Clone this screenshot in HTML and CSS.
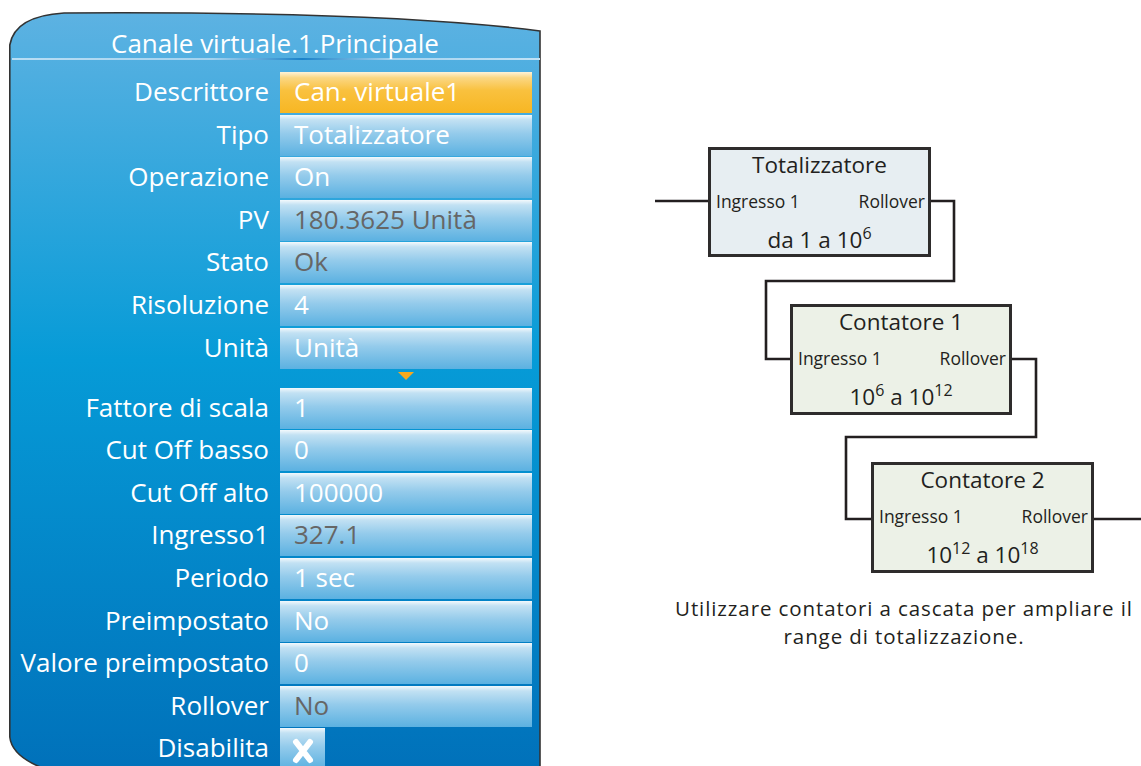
FILE: index.html
```html
<!DOCTYPE html>
<html lang="it">
<head>
    <meta charset="UTF-8">
    <meta name="viewport" content="width=device-width, initial-scale=1.0">
    <title>Canale virtuale - Totalizzatore</title>
    <link rel="stylesheet" href="styles.css">
</head>
<body>

<div class="page">

    <!-- Instrument menu panel -->
    <div class="panel">
        <div class="panel-title">Canale virtuale.1.Principale</div>
        <div class="panel-rule"></div>

        <div class="rows">
            <div class="row"><span class="label">Descrittore</span><span class="value value-focus">Can. virtuale1</span></div>
            <div class="row"><span class="label">Tipo</span><span class="value">Totalizzatore</span></div>
            <div class="row"><span class="label">Operazione</span><span class="value">On</span></div>
            <div class="row"><span class="label">PV</span><span class="value value-ro">180.3625 Unità</span></div>
            <div class="row"><span class="label">Stato</span><span class="value value-ro">Ok</span></div>
            <div class="row"><span class="label">Risoluzione</span><span class="value">4</span></div>
            <div class="row"><span class="label">Unità</span><span class="value">Unità</span></div>

            <div class="more"><span></span><span class="more-cell"><span class="more-arrow"></span></span></div>

            <div class="row"><span class="label">Fattore di scala</span><span class="value">1</span></div>
            <div class="row"><span class="label">Cut Off basso</span><span class="value">0</span></div>
            <div class="row"><span class="label">Cut Off alto</span><span class="value">100000</span></div>
            <div class="row"><span class="label">Ingresso1</span><span class="value value-ro">327.1</span></div>
            <div class="row"><span class="label">Periodo</span><span class="value">1 sec</span></div>
            <div class="row"><span class="label">Preimpostato</span><span class="value">No</span></div>
            <div class="row"><span class="label">Valore preimpostato</span><span class="value">0</span></div>
            <div class="row"><span class="label">Rollover</span><span class="value value-ro">No</span></div>
            <div class="row">
                <span class="label">Disabilita</span>
                <span class="check">
                    <svg width="26" height="26" viewBox="0 0 26 26">
                        <path d="M6 4 L20 22 M20 4 L6 22" stroke="#fff" stroke-width="6" stroke-linecap="round" fill="none"/>
                    </svg>
                </span>
            </div>
        </div>
    </div>

    <!-- Cascade diagram -->
    <div class="diagram">
        <div class="canvas">
            <svg class="wires" width="501" height="580" viewBox="0 0 501 580">
                <path d="M15 201 H68" />
                <path d="M290 201 H314 V281 H126 V359 H150" />
                <path d="M371 359 H396 V437 H206 V519 H231" />
                <path d="M453 519 H501" />
            </svg>

            <div class="block block-total">
                <div class="block-title">Totalizzatore</div>
                <div class="block-ports"><span>Ingresso 1</span><span>Rollover</span></div>
                <div class="block-range">da 1 a 10<sup>6</sup></div>
            </div>

            <div class="block block-count1">
                <div class="block-title">Contatore 1</div>
                <div class="block-ports"><span>Ingresso 1</span><span>Rollover</span></div>
                <div class="block-range">10<sup>6</sup> a 10<sup>12</sup></div>
            </div>

            <div class="block block-count2">
                <div class="block-title">Contatore 2</div>
                <div class="block-ports"><span>Ingresso 1</span><span>Rollover</span></div>
                <div class="block-range">10<sup>12</sup> a 10<sup>18</sup></div>
            </div>
        </div>

        <p class="caption">Utilizzare contatori a cascata per ampliare il<br>range di totalizzazione.</p>
    </div>

</div>

</body>
</html>
```

FILE: styles.css
```css
body {
    font-family: "Open Sans", "Noto Sans", sans-serif;
    margin: 0;
    padding: 0;
    background-color: #fff;
    overflow: hidden;
}

.page {
    display: flex;
    width: 1141px;
    height: 766px;
    overflow: hidden;
}

/* ---- panel ---- */

.panel {
    flex: none;
    width: 532px;
    height: 790px;
    margin: 11px 0 0 9px;
    background: url("data:image/svg+xml,%3Csvg xmlns='http://www.w3.org/2000/svg' width='532' height='790' viewBox='0 0 532 790'%3E%3Cdefs%3E%3ClinearGradient id='g' x1='0' y1='0' x2='0' y2='1'%3E%3Cstop offset='0' stop-color='%235db2e2'/%3E%3Cstop offset='0.44' stop-color='%23069bd7'/%3E%3Cstop offset='1' stop-color='%23006eb8'/%3E%3C/linearGradient%3E%3C/defs%3E%3Cpath d='M0.8 34 C4 15 22 4 55 2 Q380 0 531 20 L531 790 L200 790 C90 770 5 765 0.8 726 Z' fill='url(%23g)' stroke='%23333' stroke-width='1.6'/%3E%3C/svg%3E") no-repeat;
    color: #fff;
}

.panel-title {
    padding-top: 18px;
    height: 28px;
    line-height: 28px;
    font-size: 26px;
    text-align: center;
}

.panel-rule {
    height: 2px;
    margin: 1px 1px 0 3px;
    background: linear-gradient(to right, #b9def4 0%, #a5d3ef 38%, #1b82c9 55%, #a5d3ef 72%, #c0e2f6 100%);
}

.rows {
    display: flex;
    flex-direction: column;
    gap: 1.6px;
    margin-top: 12px;
}

.row {
    display: grid;
    grid-template-columns: 260px 252px;
    column-gap: 11px;
    height: 41px;
    align-items: center;
    font-size: 26px;
}

.label {
    text-align: right;
    white-space: nowrap;
    padding-bottom: 3px;
}

.value {
    box-sizing: border-box;
    height: 41px;
    line-height: 38px;
    padding: 0 0 3px 14px;
    white-space: nowrap;
    background: linear-gradient(to bottom, #f3f9fc 0%, #c2e1f3 12%, #94cbeb 45%, #5bb1e1 100%);
}

.value-ro {
    color: #666;
}

.value-focus {
    background: linear-gradient(to bottom, #fff3d8 0%, #fbd783 14%, #f9c13e 45%, #f7b623 100%);
}

.more {
    display: grid;
    grid-template-columns: 260px 252px;
    column-gap: 11px;
    height: 15.8px;
}

.more-cell {
    display: flex;
    justify-content: center;
    padding-top: 2px;
}

.more-arrow {
    width: 0;
    height: 0;
    border-left: 8.5px solid transparent;
    border-right: 8.5px solid transparent;
    border-top: 8px solid #f6a91e;
}

.check {
    width: 45px;
    height: 41px;
    display: flex;
    align-items: center;
    justify-content: center;
    padding-top: 4px;
    box-sizing: border-box;
    background: linear-gradient(to bottom, #f3f9fc 0%, #c2e1f3 12%, #94cbeb 45%, #5bb1e1 100%);
}

/* ---- diagram ---- */

.diagram {
    flex: none;
    width: 501px;
    margin-left: 99px;
    color: #231f20;
}

.canvas {
    position: relative;
    height: 580px;
}

.wires {
    position: absolute;
    left: 0;
    top: 0;
}

.wires path {
    fill: none;
    stroke: #231f20;
    stroke-width: 2.6;
}

.block {
    position: absolute;
    box-sizing: border-box;
    border: 3px solid #2e2c2c;
    display: flex;
    flex-direction: column;
}

.block-total {
    left: 68px;
    top: 147px;
    width: 223px;
    height: 110px;
    background-color: #e7eef2;
}

.block-count1 {
    left: 150px;
    top: 304px;
    width: 222px;
    height: 111px;
    background-color: #ecf1e7;
}

.block-count2 {
    left: 231px;
    top: 462px;
    width: 223px;
    height: 111px;
    background-color: #ecf1e7;
}

.block-title {
    height: 30px;
    line-height: 30px;
    font-size: 22.5px;
    text-align: center;
}

.block-ports {
    display: flex;
    justify-content: space-between;
    margin-top: 9px;
    padding: 0 3px 0 5px;
    height: 24px;
    line-height: 24px;
    font-size: 17.5px;
}

.block-range {
    margin-top: 13px;
    height: 28px;
    line-height: 28px;
    font-size: 22.5px;
    text-align: center;
}

.block-range sup {
    font-size: 16px;
    line-height: 0;
    vertical-align: 9px;
}

.caption {
    margin: 14px 0 0 20px;
    width: 488px;
    font-size: 20.5px;
    letter-spacing: 0.9px;
    line-height: 28px;
    text-align: center;
}
```
